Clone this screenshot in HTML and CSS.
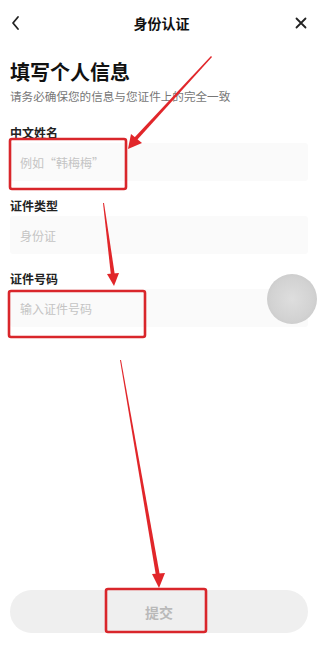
FILE: index.html
```html
<!DOCTYPE html>
<html lang="zh-CN">
<head>
<meta charset="UTF-8" />
<meta name="viewport" content="width=device-width, initial-scale=1" />
<title>身份认证</title>
<link rel="stylesheet" href="styles.css">
</head>
<body>

<div class="page">
  <div class="topbar">
    <svg class="icon-back" width="10" height="16" viewBox="0 0 10 16">
      <path d="M8 2 L3 8 L8 14" fill="none" stroke="#222" stroke-width="1.8" stroke-linecap="round" stroke-linejoin="round"/>
    </svg>
    <div class="topbar-title">身份认证</div>
    <svg class="icon-close" width="12" height="12" viewBox="0 0 12 12">
      <path d="M1.5 1.5 L10.5 10.5 M10.5 1.5 L1.5 10.5" fill="none" stroke="#222" stroke-width="1.8" stroke-linecap="round"/>
    </svg>
  </div>

  <div class="content">
    <h1 class="heading">填写个人信息</h1>
    <p class="sub">请务必确保您的信息与您证件上的完全一致</p>

    <div class="field">
      <div class="label">中文姓名</div>
      <div class="input">例如“韩梅梅”</div>
    </div>
    <div class="field">
      <div class="label">证件类型</div>
      <div class="input">身份证</div>
    </div>
    <div class="field">
      <div class="label">证件号码</div>
      <div class="input">输入证件号码</div>
    </div>
  </div>

  <button class="submit">提交</button>
</div>

<div class="float-ball"></div>

<!-- annotations -->
<svg class="marks" width="318" height="659" viewBox="0 0 318 659">
  <g fill="none" stroke="#d9262b" stroke-width="2.6">
    <rect x="10" y="139" width="116" height="50" rx="2"/>
    <rect x="9" y="291" width="136" height="46" rx="2"/>
    <rect x="106" y="589" width="100" height="43" rx="2"/>
  </g>
  <g fill="#e1262a">
    <polygon points="211,56 212,57 137,140 134,138"/>
    <polygon points="128,149 131,134 142,143"/>
    <polygon points="103,203 104,203 115,276 111,276"/>
    <polygon points="114,286 107,274 119,273"/>
    <polygon points="120,360 121,360 160,576 156,576"/>
    <polygon points="159,588 152,574 165,573"/>
  </g>
</svg>

</body>
</html>
```

FILE: styles.css
```css
* {
  margin: 0; padding: 0; box-sizing: border-box;
}
body {
  background: #fff;
  color: #111;
  font-family: "Noto Sans CJK SC", "Noto Sans", sans-serif;
  width: 318px;
  height: 659px;
  overflow: hidden;
  position: relative;
}
.page {
  display: flex;
  flex-direction: column;
  height: 659px;
}
.topbar {
  height: 46px;
  display: flex;
  align-items: center;
  justify-content: space-between;
  padding: 0 11px 0 10px;
}
.topbar-title {
  font-size: 14px;
  font-weight: bold;
  color: #111;
  margin-left: 8px;
}
.content {
  padding: 12px 10px 0;
}
.heading {
  font-size: 20px;
  line-height: 28px;
  font-weight: bold;
  color: #111;
}
.sub {
  margin-top: 2px;
  font-size: 11.6px;
  line-height: 16px;
  color: #777;
}
.field {
  margin-top: 17px;
}
.field:first-of-type {
  margin-top: 21px;
}
.label {
  font-size: 12px;
  line-height: 16px;
  font-weight: bold;
  color: #222;
  margin-bottom: 2px;
}
.input {
  height: 38px;
  display: flex;
  align-items: center;
  padding-left: 10px;
  background: #fafafa;
  border-radius: 3px;
  font-size: 12px;
  color: #c4c4c4;
}
.submit {
  margin: auto 10px 26px;
  height: 43px;
  border: none;
  border-radius: 22px;
  background: #efefef;
  color: #b9b9b9;
  font-family: inherit;
  font-size: 14px;
  font-weight: bold;
}
.float-ball {
  position: absolute;
  left: 267px;
  top: 274px;
  width: 50px;
  height: 50px;
  border-radius: 50%;
  background: radial-gradient(circle at 50% 50%, #dedede 0%, #d2d2d2 60%, #c2c2c2 100%);
}
.marks {
  position: absolute;
  left: 0;
  top: 0;
  pointer-events: none;
}
```
